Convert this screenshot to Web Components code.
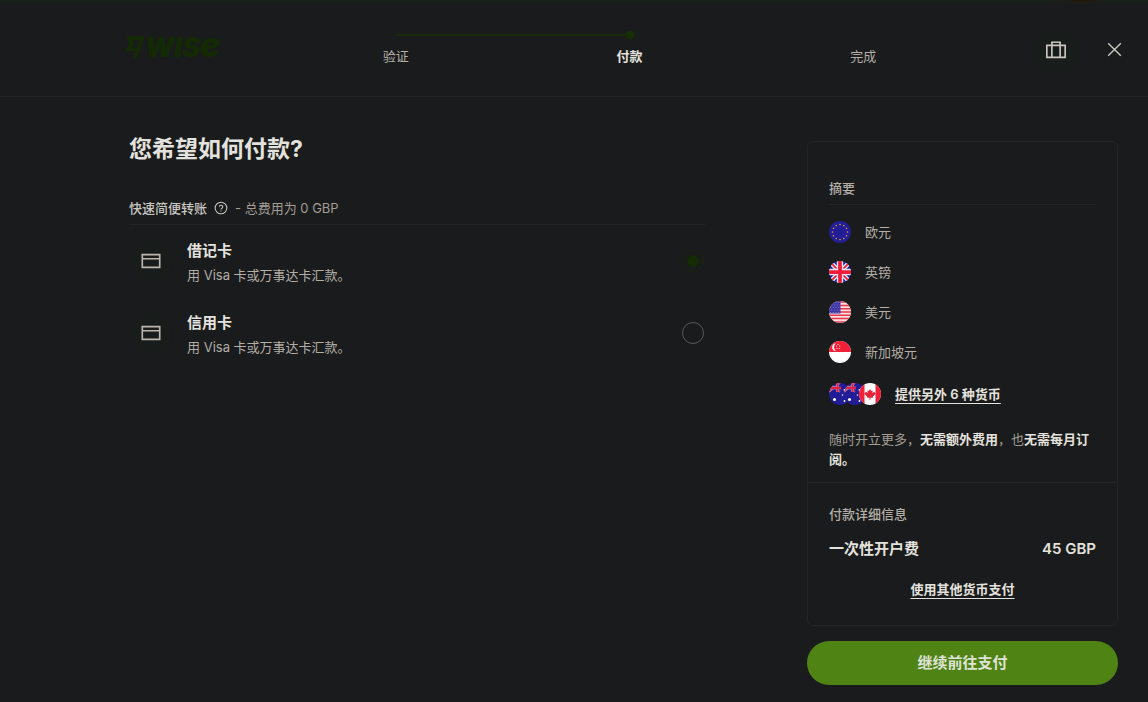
<!DOCTYPE html>
<html lang="zh-CN">
<head>
<meta charset="utf-8">
<meta name="viewport" content="width=device-width, initial-scale=1">
<title>Wise - 付款</title>
<style>
  :root {
    --bg: #191b1c;
    --line: #222526;
    --text: #b3aea6;
    --soft: #a39d94;
    --strong: #e4e2de;
    --brand: #142a04;
    --tint: #181c1a;
    --action: #4f8314;
  }
  body {
    margin: 0;
    background: var(--bg);
    color: var(--text);
    font: 13px/20px Inter, "Noto Sans CJK SC", sans-serif;
  }
</style>
</head>
<body>
<pay-page></pay-page>
<script>
const define = (name, html, setup) => {
  const tpl = document.createElement('template');
  tpl.innerHTML = html;
  customElements.define(name, class extends HTMLElement {
    connectedCallback() {
      if (this.shadowRoot) return;
      const content = tpl.content.cloneNode(true);
      if (setup) setup(this, content);
      this.attachShadow({ mode: 'open' }).append(content);
    }
  });
};

/* ---------- icons ---------- */
const ICONS = {
  briefcase: '<path d="M2 7h20v13H2zM7.500 20V3.500h9V20"/>',
  close: '<path d="M4 4l16 16M20 4L4 20"/>',
  card: '<path d="M2.500 5h19v14h-19zM2.500 9.500h19"/>',
  help: '<circle cx="12" cy="12" r="10"/><path d="M9 10a3 2.800 0 1 1 4.500 2.400c-1 .6-1.500 1-1.500 2M12 16.300v1.800"/>'
};
define('ui-icon', `
  <style>
    :host { display: inline-block; width: 24px; height: 24px; flex: none; }
    svg { display: block; width: 100%; height: 100%; fill: none; stroke: currentColor; stroke-width: 1.8; }
  </style>
  <svg viewBox="0 0 24 24" aria-hidden="true"></svg>`,
  (el, root) => { root.querySelector('svg').innerHTML = ICONS[el.getAttribute('name')]; });

/* ---------- currency flags ---------- */
const starRing = Array.from({ length: 12 }, (_, i) => {
  const a = i * Math.PI / 6;
  return `<circle cx="${(22 + 15 * Math.sin(a)).toFixed(1)}" cy="${(22 - 15 * Math.cos(a)).toFixed(1)}" r="1.7" fill="#b79a35"/>`;
}).join('');
const usStars = Array.from({ length: 20 }, (_, i) =>
  `<circle cx="${3 + (i % 4) * 5.5 + (Math.floor(i / 4) % 2) * 2.5}" cy="${3 + Math.floor(i / 4) * 5}" r="1" fill="#a9a3dc"/>`).join('');
const southern = `<rect width="44" height="44" fill="#221c96"/>
  <path d="M0 0l22 18M22 0L0 18" stroke="#b9b0dc" stroke-width="3"/>
  <path d="M0 0l22 18M22 0L0 18" stroke="#d0213f" stroke-width="2"/>
  <path d="M17 0v18M0 10h24" stroke="#b9b0dc" stroke-width="5"/>
  <path d="M17 0v18M0 10h24" stroke="#e0213f" stroke-width="4"/>
  <circle cx="11" cy="33" r="3" fill="#fff"/><circle cx="31" cy="14" r="1.8" fill="#fff"/>
  <circle cx="36" cy="22" r="1.5" fill="#fff"/><circle cx="27" cy="24" r="1.5" fill="#fff"/><circle cx="31" cy="36" r="1.8" fill="#fff"/>`;
const FLAGS = {
  eu: `<rect width="44" height="44" fill="#221c96"/>${starRing}`,
  gb: `<rect width="44" height="44" fill="#221c96"/>
    <path d="M0 0l44 44M44 0L0 44" stroke="#e9e6f3" stroke-width="9"/>
    <path d="M0 0l44 44M44 0L0 44" stroke="#ee1c3a" stroke-width="3.5"/>
    <path d="M22 0v44M0 22h44" stroke="#e9e6f3" stroke-width="13"/>
    <path d="M22 0v44M0 22h44" stroke="#ee1c3a" stroke-width="7.5"/>`,
  us: `<rect width="44" height="44" fill="#f8dfe1"/>
    <path d="M0 2h44M0 9h44M0 15.500h44M0 22h44M0 28.500h44M0 35h44M0 42h44" stroke="#e6364c" stroke-width="3.2"/>
    <rect width="23" height="25" fill="#3c35a4"/>${usStars}`,
  sg: `<rect width="44" height="44" fill="#fff"/><rect width="44" height="22" fill="#f21f39"/>
    <path d="M14 5a7.500 7.500 0 1 0 0 15a9 9 0 0 1 0-15z" fill="#fff"/>
    <g fill="#fff"><circle cx="18" cy="7" r="1.2"/><circle cx="21.500" cy="10" r="1.2"/><circle cx="20.500" cy="15" r="1.2"/><circle cx="16" cy="15" r="1.2"/><circle cx="15" cy="10" r="1.2"/></g>`,
  au: southern,
  nz: southern,
  ca: `<rect width="44" height="44" fill="#fff"/><path d="M0 0h11v44H0zM33 0h11v44H33z" fill="#f21f39"/>
    <path d="M22 12l2.500 4 3-1-1 5 4-2.500 3 4-6 6 .500 2h-5v4h-2v-4h-5l.500-2-6-6 3-4 4 2.500-1-5 3 1z" fill="#e8203a"/>`
};
define('currency-flag', `
  <style>
    :host { display: block; width: 22px; height: 22px; border-radius: 50%; overflow: hidden; flex: none; }
    svg { display: block; width: 100%; height: 100%; }
  </style>
  <svg viewBox="0 0 44 44" aria-hidden="true"></svg>`,
  (el, root) => { root.querySelector('svg').innerHTML = FLAGS[el.getAttribute('code')]; });

/* ---------- header ---------- */
define('brand-logo', `
  <style>
    :host { display: block; }
    a { display: flex; align-items: center; color: var(--brand); text-decoration: none; }
    svg { width: 21px; height: 22px; fill: currentColor; flex: none; }
    .word { font: italic 900 27px/36px Inter, sans-serif; }
    .word span { font-size: 34px; }
  </style>
  <a href="#" aria-label="Wise">
    <svg viewBox="0 0 21 22" aria-hidden="true"><path d="M2 0H21L13 22H9L15.500 4H8.500L11 8L7.500 11.500H12.500L11.500 15H0L5.500 8Z"/></svg>
    <span class="word">WIS<span>e</span></span>
  </a>`);

define('step-bar', `
  <style>
    :host { display: block; }
    .track { display: flex; margin: 0 calc(100% / 6); height: 2px; }
    .track i { flex: 1; background: #1a1e1b; }
    .track .done { position: relative; background: #172b09; }
    .done::after { content: ""; position: absolute; right: -4px; top: -3px; width: 8px; height: 8px; border-radius: 50%; background: #163006; }
    ol { display: flex; margin: 10px 0 0; padding: 0; list-style: none; text-align: center; }
    li { flex: 1; }
    li[aria-current] { color: var(--strong); font-weight: 600; }
  </style>
  <div class="track"><i class="done"></i><i></i></div>
  <ol><li>验证</li><li aria-current="step">付款</li><li>完成</li></ol>`);

define('page-header', `
  <style>
    :host { display: flex; align-items: center; box-sizing: border-box; height: 97px; padding: 3px 22px 0 124px;
      border-bottom: 1px solid var(--line);
      background: linear-gradient(#23180e, #23180e) calc(100% - 53px) 0 / 24px 2px no-repeat,
                  linear-gradient(#1b1f1b, #1b1f1b) 0 0 / 100% 3px no-repeat; }
    brand-logo { width: 94px; margin-right: 61px; padding-bottom: 6px; flex: none; }
    step-bar { flex: 1; margin-right: 52px; }
    .actions { display: flex; align-items: center; gap: 22px; }
    button { display: grid; place-items: center; width: 24px; height: 24px; padding: 0; border: 0; background: none; color: #c9c6c1; cursor: pointer; }
    .account { width: 48px; height: 48px; border-radius: 50%; background: var(--tint); }
    .account ui-icon { width: 22px; height: 22px; }
    .exit ui-icon { width: 19px; height: 19px; }
  </style>
  <brand-logo></brand-logo>
  <step-bar></step-bar>
  <div class="actions">
    <button class="account" type="button" aria-label="账户"><ui-icon name="briefcase"></ui-icon></button>
    <button class="exit" type="button" aria-label="关闭"><ui-icon name="close"></ui-icon></button>
  </div>`);

/* ---------- payment methods ---------- */
define('method-list', `
  <style>
    :host { display: block; }
    h1 { margin: 0; color: var(--strong); font-size: 23px; line-height: 32px; font-weight: 700; }
    fieldset { margin: 33px 0 0; padding: 0; border: 0; min-width: 0; }
    legend { display: flex; align-items: center; box-sizing: border-box; width: 100%; height: 27px; padding: 0 0 6px;
      border-bottom: 1px solid var(--line); color: var(--soft); }
    legend strong { color: #c9c6c1; font-weight: 500; }
    legend button { display: flex; margin: 0 7px; padding: 0; border: 0; background: none; color: #c9c6c1; }
    legend ui-icon { width: 14px; height: 14px; }
    label { display: flex; align-items: center; height: 72px; cursor: pointer; }
    .badge { display: grid; place-items: center; width: 44px; height: 44px; margin-right: 14px; border-radius: 50%; background: var(--tint); color: #b9b6b0; flex: none; }
    .badge ui-icon { width: 22px; height: 22px; }
    .text { flex: 1; padding-top: 3px; }
    .text b { display: block; color: var(--strong); font-size: 15px; line-height: 24px; font-weight: 600; }
    .text span { display: block; line-height: 24px; }
    input { appearance: none; display: grid; place-items: center; width: 22px; height: 22px; margin: 0 1px 0 0; border: 1px solid #56595a; border-radius: 50%; }
    input:checked { border-color: #19250f; }
    input:checked::before { content: ""; width: 12px; height: 12px; border-radius: 50%; background: #132c03; }
  </style>
  <h1>您希望如何付款?</h1>
  <fieldset>
    <legend><strong>快速简便转账</strong><button type="button" aria-label="帮助"><ui-icon name="help"></ui-icon></button>- 总费用为 0 GBP</legend>
    <label>
      <span class="badge"><ui-icon name="card"></ui-icon></span>
      <span class="text"><b>借记卡</b><span>用 Visa 卡或万事达卡汇款。</span></span>
      <input type="radio" name="method" value="debit" checked>
    </label>
    <label>
      <span class="badge"><ui-icon name="card"></ui-icon></span>
      <span class="text"><b>信用卡</b><span>用 Visa 卡或万事达卡汇款。</span></span>
      <input type="radio" name="method" value="credit">
    </label>
  </fieldset>`);

/* ---------- summary ---------- */
define('currency-row', `
  <style>
    :host { display: flex; align-items: center; gap: 14px; height: 40px; }
  </style>
  <currency-flag></currency-flag><span><slot></slot></span>`,
  (el, root) => root.querySelector('currency-flag').setAttribute('code', el.getAttribute('code')));

define('order-summary', `
  <style>
    :host { display: block; }
    .card { border: 1px solid var(--line); border-radius: 6px; }
    section { padding: 36px 21px 13px; }
    section + section { padding: 21px 21px 26px; border-top: 1px solid var(--line); }
    h2 { margin: 0; font-size: 13px; line-height: 20px; font-weight: 500; }
    .overview h2 { padding-bottom: 6px; border-bottom: 1px solid var(--line); margin-bottom: 7px; }
    a { color: var(--strong); font-weight: 600; text-underline-offset: 4px; text-decoration-thickness: 1px; }
    .more { display: flex; align-items: center; gap: 14px; height: 43px; }
    .stack { display: flex; }
    .stack currency-flag + currency-flag { margin-left: -7px; }
    p { margin: 14px 0 0; color: var(--soft); }
    p b { color: var(--strong); font-weight: 600; }
    dl { display: flex; justify-content: space-between; margin: 13px 0 0; color: var(--strong); font-size: 15px; line-height: 24px; font-weight: 600; }
    dd { margin: 0; }
    .other { margin: 18px 0 0; text-align: center; }
    button { display: block; width: 100%; height: 44px; margin-top: 15px; border: 0; border-radius: 22px; background: var(--action); color: #dfe3d6; font: inherit; font-size: 15px; font-weight: 600; cursor: pointer; }
  </style>
  <div class="card">
    <section class="overview">
      <h2>摘要</h2>
      <currency-row code="eu">欧元</currency-row>
      <currency-row code="gb">英镑</currency-row>
      <currency-row code="us">美元</currency-row>
      <currency-row code="sg">新加坡元</currency-row>
      <div class="more">
        <span class="stack"><currency-flag code="au"></currency-flag><currency-flag code="nz"></currency-flag><currency-flag code="ca"></currency-flag></span>
        <a href="#">提供另外 6 种货币</a>
      </div>
      <p>随时开立更多，<b>无需额外费用</b>，也<b>无需每月订</b><b>阅。</b></p>
    </section>
    <section>
      <h2>付款详细信息</h2>
      <dl><dt>一次性开户费</dt><dd>45 GBP</dd></dl>
      <p class="other"><a href="#">使用其他货币支付</a></p>
    </section>
  </div>
  <button type="button">继续前往支付</button>`);

define('pay-page', `
  <style>
    :host { display: block; }
    main { display: grid; grid-template-columns: minmax(0, 576fr) minmax(0, 311fr); column-gap: 102px; align-items: start; padding: 36px 30px 18px 129px; }
    order-summary { margin-top: 8px; }
  </style>
  <page-header></page-header>
  <main>
    <method-list></method-list>
    <order-summary></order-summary>
  </main>`);
</script>
</body>
</html>
